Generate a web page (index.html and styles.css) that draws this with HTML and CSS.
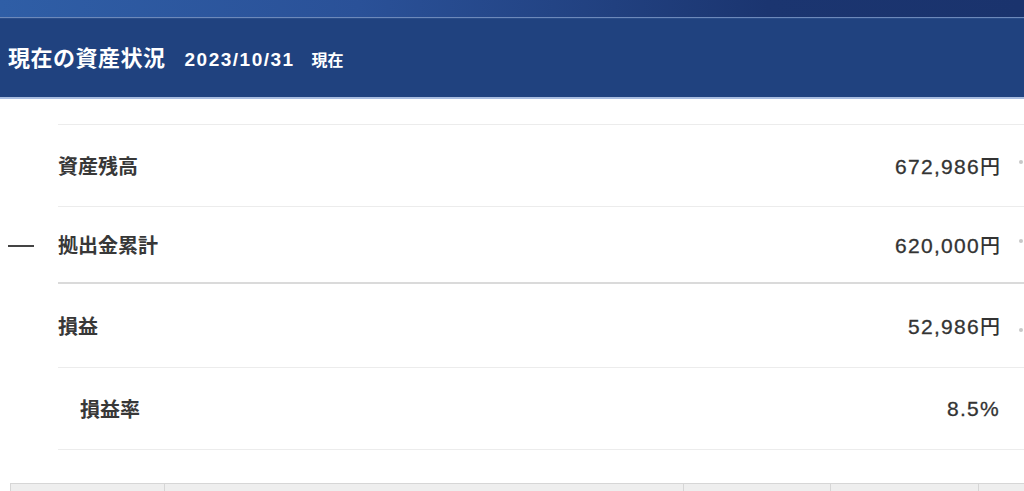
FILE: index.html
```html
<!DOCTYPE html>
<html lang="ja">
<head>
<meta charset="utf-8">
<link rel="stylesheet" href="styles.css">
</head>
<body>
<div class="topbar"></div>
<header class="section-head">
  <h1 class="title">現在の資産状況</h1>
  <span class="date">2023/10/31</span>
  <span class="suffix">現在</span>
</header>
<div class="list">
  <div class="row first">
    <div class="op"></div>
    <div class="main">
      <div class="label">資産残高</div>
      <div class="value">672,986<span class="yen">円</span></div>
      <div class="extra"><span class="mark"></span></div>
    </div>
  </div>
  <div class="row subtotal">
    <div class="op"><span class="minus"></span></div>
    <div class="main">
      <div class="label">拠出金累計</div>
      <div class="value">620,000<span class="yen">円</span></div>
      <div class="extra"><span class="mark"></span></div>
    </div>
  </div>
  <div class="row">
    <div class="op"></div>
    <div class="main tall">
      <div class="label">損益</div>
      <div class="value">52,986<span class="yen">円</span></div>
      <div class="extra"><span class="mark low"></span></div>
    </div>
  </div>
  <div class="row">
    <div class="op"></div>
    <div class="main">
      <div class="label sub">損益率</div>
      <div class="value">8.5%</div>
      <div class="extra"></div>
    </div>
  </div>
</div>
<div class="table">
  <div class="cell"></div>
  <div class="cell"></div>
  <div class="cell"></div>
  <div class="cell"></div>
  <div class="cell"></div>
</div>
</body>
</html>
```
FILE: styles.css
```css
html, body {
  margin: 0;
  padding: 0;
  background: #fff;
}
body {
  width: 1024px;
  height: 491px;
  overflow: hidden;
  font-family: "Noto Sans CJK JP", sans-serif;
  color: #333;
}
.topbar {
  height: 17px;
  background: linear-gradient(to right, #2f5ea6 0%, #2a5198 35%, #21407f 60%, #1b3570 75%, #1a336d 100%);
  border-bottom: 1px solid #6d89ba;
}
.section-head {
  display: flex;
  align-items: baseline;
  height: 81px;
  box-sizing: border-box;
  padding: 0 8px;
  padding-top: 22px;
  background: #20427f;
  border-top: 1px solid #2a4d8a;
  border-bottom: 2px solid #a9bde0;
  color: #fff;
}
.title {
  margin: 0;
  font-size: 22px;
  font-weight: 700;
  line-height: 30px;
  letter-spacing: 0.5px;
}
.date {
  margin-left: 19px;
  font-family: "Liberation Sans", sans-serif;
  font-weight: 700;
  font-size: 19px;
  letter-spacing: 1.5px;
}
.suffix {
  margin-left: 17px;
  font-size: 16px;
  font-weight: 700;
}
.list {
  margin-top: 25px;
  width: 1042px;
}
.row {
  display: flex;
}
.op {
  width: 58px;
  flex: none;
  display: flex;
  align-items: center;
}
.minus {
  display: block;
  width: 26px;
  height: 2px;
  margin-left: 8px;
  background: #444;
}
.main {
  flex: 1;
  display: flex;
  align-items: center;
  height: 82px;
  box-sizing: border-box;
  border-bottom: 1px solid #ececec;
}
.first .main {
  border-top: 1px solid #ececec;
  height: 83px;
}
.subtotal .main {
  height: 77px;
  border-bottom: 2px solid #dadada;
}
.main.tall {
  height: 84px;
}
.label {
  flex: 1;
  font-size: 20px;
  font-weight: 700;
  color: #383838;
}
.label.sub {
  padding-left: 22px;
}
.value {
  font-family: "Liberation Sans", sans-serif;
  font-size: 21px;
  letter-spacing: 1.3px;
  color: #333;
  -webkit-text-stroke: 0.3px #333;
}
.yen {
  font-family: "Noto Sans CJK JP", sans-serif;
  font-size: 20px;
  letter-spacing: 0;
  font-weight: 500;
  -webkit-text-stroke: 0;
}
.extra {
  width: 42px;
  flex: none;
  padding-left: 19px;
  box-sizing: border-box;
  display: flex;
  align-items: center;
}
.mark {
  display: block;
  width: 4px;
  height: 4px;
  margin-bottom: 8px;
  border-radius: 2px;
  background: #c8c8c8;
}
.mark.low {
  margin-bottom: -8px;
}
.table {
  display: grid;
  grid-template-columns: 154px 519px 147px 148px 60px;
  margin-top: 33px;
  margin-left: 10px;
}
.cell {
  height: 20px;
  background: #eeeeee;
  border-top: 1px solid #d6d6d6;
  border-left: 1px solid #d6d6d6;
}
```
